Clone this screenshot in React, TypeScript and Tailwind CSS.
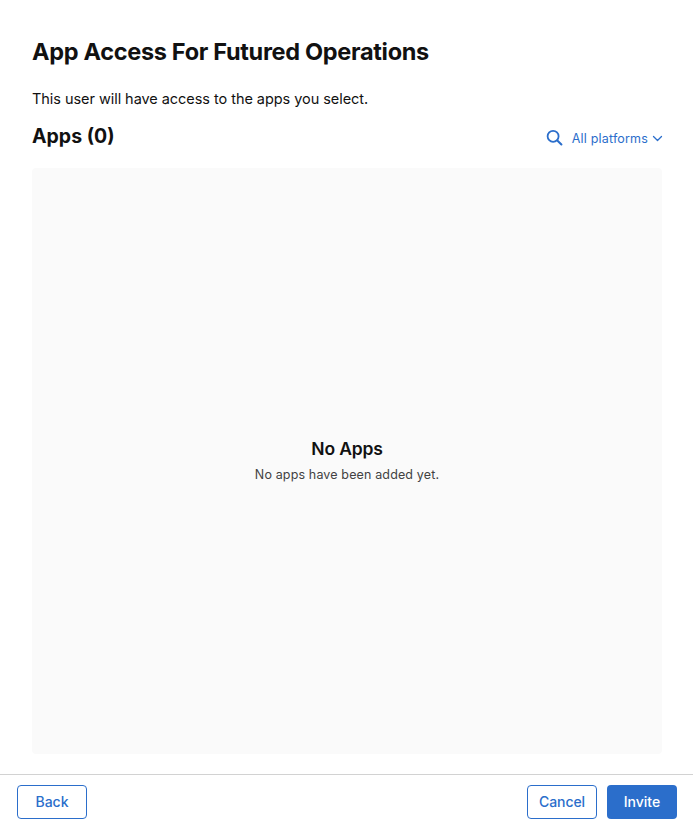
export default function App() {
  return (
    <div className="flex h-[827px] w-[693px] flex-col bg-white font-['Inter',sans-serif] text-[#111111]">
      <main className="flex flex-1 flex-col px-8 pt-[36px] pb-5">
        <h1 className="h-8 whitespace-nowrap text-[23.5px] leading-8 font-bold tracking-[-0.31px]">App Access For Futured Operations</h1>
        <p className="mt-[21px] h-5 text-[14.5px] leading-5 tracking-[-0.05px]">This user will have access to the apps you select.</p>
        <div className="mt-[13px] flex h-[46px] items-start justify-between">
          <h2 className="text-[19.5px] leading-7 font-bold">Apps (0)</h2>
          <div className="-mr-[2px] flex h-[32px] items-center text-[#2b6ecb]">
            <svg width="18" height="18" viewBox="0 0 18 18" fill="none" stroke="currentColor" strokeWidth="1.8" strokeLinecap="round">
              <circle cx="7.1" cy="7.3" r="5.5" />
              <path d="M11.3 11.5l4.1 4" strokeWidth="2.1" />
            </svg>
            <span className="ml-2 pt-[2px] text-[12.5px] leading-5 tracking-[0.18px]">All platforms</span>
            <svg className="ml-1" width="11" height="8" viewBox="0 0 11 8" fill="none" stroke="currentColor" strokeWidth="1.3" strokeLinecap="round" strokeLinejoin="round">
              <path d="M1.5 2.5l4 4 4-4" />
            </svg>
          </div>
        </div>
        <section className="flex h-[586px] w-[630px] flex-col items-center rounded bg-[#fafafa] pt-[269px]">
          <h3 className="text-[17.5px] leading-6 font-semibold tracking-[-0.15px]">No Apps</h3>
          <p className="mt-1 text-[12.5px] leading-5 tracking-[0.14px] text-[#424242]">No apps have been added yet.</p>
        </section>
      </main>
      <footer className="flex h-[53px] justify-between border-t border-[#d2d2d2] pt-[10px] pr-4 pl-[17px] text-[14px] font-medium text-[#2b6ecb]">
        <button className="h-[34px] w-[70px] rounded border border-[#2b6ecb] pb-[2px]">Back</button>
        <div className="flex gap-[10px]">
          <button className="h-[34px] w-[70px] rounded border border-[#2b6ecb] pb-[2px] tracking-[-0.1px]">Cancel</button>
          <button className="h-[34px] w-[70px] rounded bg-[#2b6ecb] pb-[2px] text-white">Invite</button>
        </div>
      </footer>
    </div>
  );
}
